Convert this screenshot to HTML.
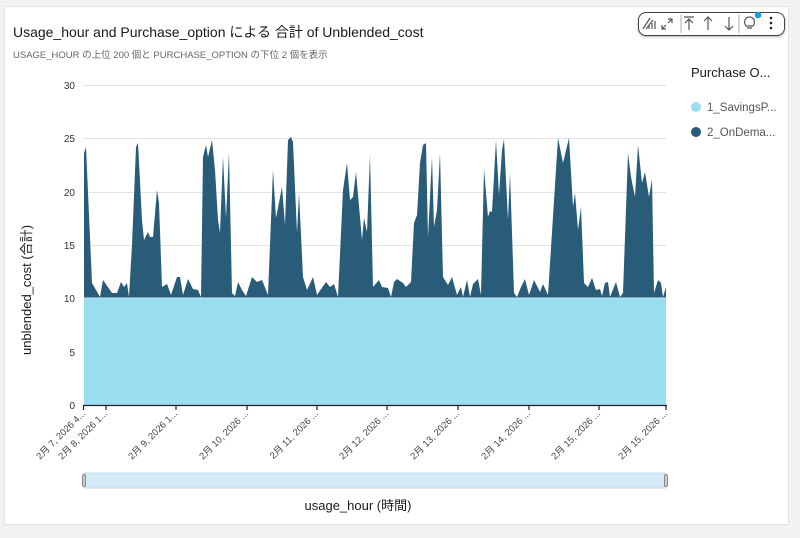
<!DOCTYPE html>
<html><head><meta charset="utf-8"><style>
body{margin:0;width:800px;height:538px;background:#f2f2f2;font-family:"Liberation Sans","Noto Sans CJK JP",sans-serif;overflow:hidden;position:relative}
.panel{position:absolute;left:4px;top:6px;width:783px;height:517px;background:#fff;border:1px solid #e3e3e3}
.t{position:absolute;white-space:nowrap}
</style></head><body>
<div class="panel"></div>
<div class="t" style="left:13px;top:22px;font-size:14px;color:#16191f">Usage_hour and Purchase_option による 合計 of Unblended_cost</div>
<div class="t" style="left:13px;top:47px;font-size:9.5px;color:#666">USAGE_HOUR の上位 200 個と PURCHASE_OPTION の下位 2 個を表示</div>
<div class="t" style="left:691px;top:65px;font-size:13px;color:#16191f">Purchase O...</div>
<div class="t" style="left:691px;top:102px;font-size:11.5px;color:#555"><span style="display:inline-block;width:10px;height:10px;border-radius:50%;background:#9adcf0;margin-right:6px;vertical-align:-1px"></span>1_SavingsP...</div>
<div class="t" style="left:691px;top:127px;font-size:11.5px;color:#555"><span style="display:inline-block;width:10px;height:10px;border-radius:50%;background:#285c78;margin-right:6px;vertical-align:-1px"></span>2_OnDema...</div>
<div style="position:absolute;left:638px;top:12px;width:145px;height:22px;border:1.5px solid #444;border-radius:8px;background:#fff;box-shadow:0 1px 2px rgba(0,0,0,.3)"></div>
<svg style="position:absolute;left:0;top:0" width="800" height="538">
<g fill="none" stroke="#555" stroke-width="1.2">
<path d="M643 29 L650 18 M646 29 L653 20 M649 29 V25 M652 29 V23 M655 29 V21"/>
<path d="M662 29 L666 25 M662 25 V29 H666 M668 23 L672 19 M668 19 H672 V23"/>
<line x1="681" y1="15" x2="681" y2="33" stroke="#bbb"/>
<path d="M684 17 H694 M689 30 V19 M685 23 L689 19 L693 23"/>
<path d="M708 30 V17 M704 21 L708 17 L712 21"/>
<path d="M729 17 V30 M725 26 L729 30 L733 26"/>
<line x1="739" y1="15" x2="739" y2="33" stroke="#bbb"/>
<path d="M747 28 H752 M746 26 C743 22 745 17 749.5 17 C754 17 756 22 753 26 Z"/>
</g>
<circle cx="758" cy="15" r="3.3" fill="#1a9be0"/>
<g fill="#222"><circle cx="771" cy="18" r="1.3"/><circle cx="771" cy="23" r="1.3"/><circle cx="771" cy="28" r="1.3"/></g>
<g stroke="#e2e2e2" stroke-width="1">
<line x1="84" y1="85.5" x2="666" y2="85.5"/><line x1="84" y1="138.5" x2="666" y2="138.5"/><line x1="84" y1="192.5" x2="666" y2="192.5"/><line x1="84" y1="245.5" x2="666" y2="245.5"/><line x1="84" y1="298.5" x2="666" y2="298.5"/><line x1="84" y1="352.5" x2="666" y2="352.5"/>
</g>
<path fill="#285c78" d="M84 405 L84 153 L86 147 L92 283 L100 297 L103 280 L112 293 L117 293 L121 282 L124 287 L127 283 L129 297 L132 245 L136 147 L138 143 L142 220 L144 240 L148 232 L150 237 L153 237 L157 190 L159 203 L162 287 L167 284 L171 295 L177 277 L180 277 L183 295 L188 279 L193 289 L198 290 L201 297 L203 157 L206 145 L208 157 L212 140 L215 170 L218 220 L220 233 L223 157 L226 218 L229 152 L232 293 L235 296 L238 282 L242 290 L246 296 L252 277 L257 282 L262 280 L268 295 L273 170 L276 218 L282 187 L285 225 L288 140 L291 137 L293 142 L297 233 L299 193 L303 277 L307 290 L313 277 L317 295 L326 282 L330 287 L334 284 L338 297 L343 190 L347 163 L350 200 L353 197 L356 172 L362 240 L364 218 L367 232 L370 155 L373 287 L379 280 L382 287 L388 288 L391 297 L394 282 L397 279 L403 283 L406 287 L411 282 L414 223 L417 215 L420 163 L423 145 L426 143 L428 237 L432 157 L434 227 L437 210 L440 153 L443 277 L448 285 L452 277 L457 295 L461 287 L463 297 L467 280 L470 297 L473 284 L478 279 L481 295 L484 169 L488 217 L490 211 L492 212 L496 140 L499 195 L502 150 L504 139 L508 220 L510 173 L514 293 L517 297 L521 287 L525 279 L529 295 L534 280 L540 292 L543 284 L548 295 L558 138 L563 163 L569 138 L573 207 L575 193 L578 230 L581 207 L584 283 L588 287 L592 278 L596 290 L600 289 L602 296 L605 283 L608 282 L610 297 L616 282 L620 297 L623 293 L628 153 L631 177 L635 197 L638 145 L642 183 L645 172 L649 197 L652 179 L654 293 L658 280 L661 283 L663 297 L666 287 L666 405 Z"/>
<rect x="84" y="298" width="582" height="107" fill="#9adcf0"/>
<line x1="84" y1="298" x2="666" y2="298" stroke="#c9e9f4" stroke-width="1"/>
<g stroke="#222" stroke-width="1.2"><line x1="83" y1="405.5" x2="667" y2="405.5"/>
<path d="M83.5 405 v5 M106 405 v5 M176 405 v5 M247 405 v5 M317 405 v5 M387 405 v5 M458 405 v5 M529 405 v5 M599 405 v5 M666 405 v5"/></g>
<g font-size="10" fill="#333" text-anchor="end" font-family="Liberation Sans, sans-serif">
<text x="75" y="89">30</text><text x="75" y="142">25</text><text x="75" y="196">20</text><text x="75" y="249">15</text><text x="75" y="302">10</text><text x="75" y="356">5</text><text x="75" y="409">0</text>
</g>
<g font-size="9.5" fill="#444" text-anchor="end" font-family="Liberation Sans, Noto Sans CJK JP, sans-serif">
<text transform="translate(86,414) rotate(-45)">2月 7, 2026 4...</text>
<text transform="translate(108,414) rotate(-45)">2月 8, 2026 1...</text>
<text transform="translate(178,414) rotate(-45)">2月 9, 2026 1...</text>
<text transform="translate(249,414) rotate(-45)">2月 10, 2026 ...</text>
<text transform="translate(319,414) rotate(-45)">2月 11, 2026 ...</text>
<text transform="translate(389,414) rotate(-45)">2月 12, 2026 ...</text>
<text transform="translate(460,414) rotate(-45)">2月 13, 2026 ...</text>
<text transform="translate(531,414) rotate(-45)">2月 14, 2026 ...</text>
<text transform="translate(601,414) rotate(-45)">2月 15, 2026 ...</text>
<text transform="translate(668,414) rotate(-45)">2月 15, 2026 ...</text>
</g>
<rect x="84" y="473" width="582" height="15" fill="#d4eaf7" stroke="#c4dcec"/>
<rect x="82.5" y="474.5" width="3" height="12" rx="1.5" fill="#ccc" stroke="#888"/>
<rect x="664.5" y="474.5" width="3" height="12" rx="1.5" fill="#ccc" stroke="#888"/>
<text x="358" y="510" font-size="13" fill="#16191f" text-anchor="middle" font-family="Liberation Sans, Noto Sans CJK JP, sans-serif">usage_hour (時間)</text>
<text transform="translate(31,290) rotate(-90)" font-size="13" fill="#16191f" text-anchor="middle" font-family="Liberation Sans, Noto Sans CJK JP, sans-serif">unblended_cost (合計)</text>
</svg>
</body></html>
